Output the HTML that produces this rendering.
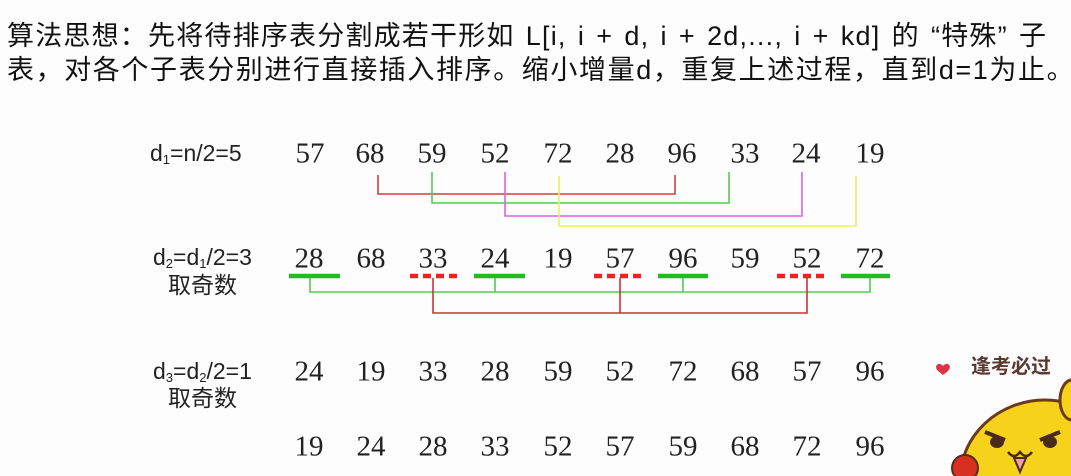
<!DOCTYPE html>
<html><head><meta charset="utf-8"><style>
html,body{margin:0;width:1071px;height:476px;overflow:hidden}
body{background:#fdfdfe;position:relative;font-family:"Liberation Sans","Noto Sans CJK SC",sans-serif;}
.t{position:absolute;left:7px;font-size:27px;color:#111;white-space:nowrap;line-height:30px;letter-spacing:1.2px}
.n{position:absolute;font-family:"Liberation Serif","Noto Serif CJK SC",serif;font-size:29px;color:#222;transform:translate(-50%,-50%);line-height:1}
.l{position:absolute;font-size:23px;color:#222;line-height:1;white-space:nowrap}
sub{font-size:13px;vertical-align:-3px}
</style></head><body>
<div class="t" style="top:21px;word-spacing:2.5px">算法思想：先将待排序表分割成若干形如 L[i, i + d, i + 2d,..., i + kd] 的 “特殊” 子</div>
<div class="t" style="top:55px;letter-spacing:1.6px">表，对各个子表分别进行直接插入排序。缩小增量d，重复上述过程，直到d=1为止。</div>

<div class="l" style="left:150px;top:142px">d<sub>1</sub>=n/2=5</div>
<div class="l" style="left:153px;top:246px">d<sub>2</sub>=d<sub>1</sub>/2=3</div>
<div class="l" style="left:168px;top:274px">取奇数</div>
<div class="l" style="left:153px;top:360px">d<sub>3</sub>=d<sub>2</sub>/2=1</div>
<div class="l" style="left:168px;top:387px">取奇数</div>

<svg width="1071" height="476" style="position:absolute;left:0;top:0;overflow:hidden">
<g fill="none" stroke-width="1.6">
<polyline points="378,175 378,194 675,194 675,175" stroke="#d04040"/>
<polyline points="432,172 432,203 729,203 729,172" stroke="#55cc55"/>
<polyline points="505,172 505,216 802,216 802,172" stroke="#e060e0"/>
<polyline points="559,176 559,226 856,226 856,176" stroke="#eeee60"/>
<polyline points="310,278 310,292 870,292 870,278" stroke="#55cc55"/>
<line x1="495" y1="278" x2="495" y2="292" stroke="#55cc55"/>
<line x1="683" y1="278" x2="683" y2="292" stroke="#55cc55"/>
<polyline points="433,278 433,313 807,313 807,278" stroke="#cc3333"/>
<line x1="620" y1="278" x2="620" y2="313" stroke="#cc3333"/>
</g>
<g stroke="#22bb22" stroke-width="4.5">
<line x1="289" y1="276" x2="340" y2="276"/><line x1="474" y1="276" x2="525" y2="276"/>
<line x1="658" y1="276" x2="708" y2="276"/><line x1="841" y1="276" x2="890" y2="276"/>
</g>
<g stroke="#ee2222" stroke-width="4.5" stroke-dasharray="8,5">
<line x1="410" y1="276" x2="462" y2="276"/><line x1="594" y1="276" x2="646" y2="276"/><line x1="777" y1="276" x2="829" y2="276"/>
</g>
<path d="M943 366c-4-5-10 0-5 5l5 4 5-4c5-5-1-10-5-5z" fill="#dd3344"/>
<text x="971" y="373" font-family="Liberation Sans,Noto Sans CJK SC,sans-serif" font-size="20" font-weight="bold" fill="#5a3a30">逢考必过</text>
<ellipse cx="1045" cy="480" rx="85" ry="80" fill="#f7d21a" stroke="#6b3a1a" stroke-width="3"/>
<ellipse cx="1072" cy="400" rx="12" ry="20" fill="#f7d21a" stroke="#6b3a1a" stroke-width="3"/>
<path d="M985 432l20 8M1040 440l20-8" stroke="#4a2a1a" stroke-width="4"/>
<ellipse cx="997" cy="442" rx="7" ry="6" fill="#4a2a1a"/><ellipse cx="1050" cy="442" rx="7" ry="6" fill="#4a2a1a"/>
<path d="M1008 452q6 8 12 0q6 8 12 0" stroke="#4a2a1a" stroke-width="2.5" fill="none"/>
<path d="M1014 458l6 14 6-14z" fill="#f0a0a0" stroke="#4a2a1a" stroke-width="2"/>
<circle cx="965" cy="468" r="13" fill="#d83020" stroke="#5a2a1a" stroke-width="2"/>
</svg>
<div class="n" style="left:310px;top:154px">57</div><div class="n" style="left:370px;top:154px">68</div><div class="n" style="left:432px;top:154px">59</div><div class="n" style="left:495px;top:154px">52</div><div class="n" style="left:558px;top:154px">72</div><div class="n" style="left:620px;top:154px">28</div><div class="n" style="left:682px;top:154px">96</div><div class="n" style="left:745px;top:154px">33</div><div class="n" style="left:806px;top:154px">24</div><div class="n" style="left:870px;top:154px">19</div>
<div class="n" style="left:309px;top:259px">28</div><div class="n" style="left:371px;top:259px">68</div><div class="n" style="left:433px;top:259px">33</div><div class="n" style="left:495px;top:259px">24</div><div class="n" style="left:558px;top:259px">19</div><div class="n" style="left:620px;top:259px">57</div><div class="n" style="left:683px;top:259px">96</div><div class="n" style="left:745px;top:259px">59</div><div class="n" style="left:807px;top:259px">52</div><div class="n" style="left:870px;top:259px">72</div>
<div class="n" style="left:309px;top:372px">24</div><div class="n" style="left:371px;top:372px">19</div><div class="n" style="left:433px;top:372px">33</div><div class="n" style="left:495px;top:372px">28</div><div class="n" style="left:558px;top:372px">59</div><div class="n" style="left:620px;top:372px">52</div><div class="n" style="left:683px;top:372px">72</div><div class="n" style="left:745px;top:372px">68</div><div class="n" style="left:807px;top:372px">57</div><div class="n" style="left:870px;top:372px">96</div>
<div class="n" style="left:309px;top:447px">19</div><div class="n" style="left:371px;top:447px">24</div><div class="n" style="left:433px;top:447px">28</div><div class="n" style="left:495px;top:447px">33</div><div class="n" style="left:558px;top:447px">52</div><div class="n" style="left:620px;top:447px">57</div><div class="n" style="left:683px;top:447px">59</div><div class="n" style="left:745px;top:447px">68</div><div class="n" style="left:807px;top:447px">72</div><div class="n" style="left:870px;top:447px">96</div>
</body></html>
